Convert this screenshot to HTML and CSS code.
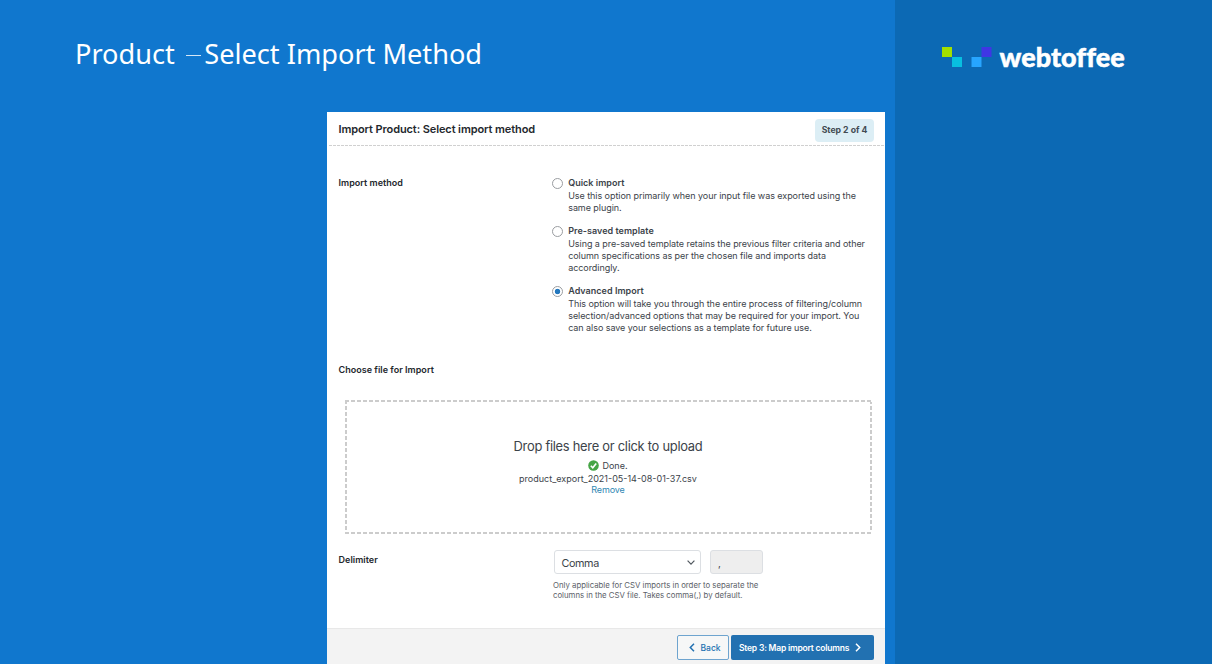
FILE: index.html
```html
<!DOCTYPE html>
<html lang="en">
<head>
<meta charset="utf-8">
<title>Product – Select Import Method</title>
<link rel="stylesheet" href="styles.css">
</head>
<body>
<div class="slide">
  <main class="stage">
    <h1 class="title"><span class="title-first">Product</span><span class="title-dash"></span><span class="title-rest">Select Import Method</span></h1>
    <section class="panel">
      <header class="panel-head">
        <h2 class="panel-title">Import Product: Select import method</h2>
        <span class="step">Step 2 of 4</span>
      </header>
      <div class="method">
        <div class="label">Import method</div>
        <div class="options">
          <div class="option option-quick">
            <span class="radio"></span>
            <div class="option-text"><b>Quick import</b><p>Use this option primarily when your input file was exported using the<br>same plugin.</p></div>
          </div>
          <div class="option option-saved">
            <span class="radio"></span>
            <div class="option-text"><b>Pre-saved template</b><p>Using a pre-saved template retains the previous filter criteria and other<br>column specifications as per the chosen file and imports data<br>accordingly.</p></div>
          </div>
          <div class="option">
            <span class="radio checked"></span>
            <div class="option-text"><b>Advanced Import</b><p>This option will take you through the entire process of filtering/column<br>selection/advanced options that may be required for your import. You<br>can also save your selections as a template for future use.</p></div>
          </div>
        </div>
      </div>
      <div class="label label-choose">Choose file for Import</div>
      <div class="dropzone">
        <div class="drop-title">Drop files here or click to upload</div>
        <div class="done">
          <svg class="check" viewBox="0 0 11 11"><circle cx="5.5" cy="5.5" r="5.3" fill="#46a546"/><path d="M2.8 5.7 4.8 7.7 8.2 3.4" fill="none" stroke="#fff" stroke-width="1.6"/></svg>
          <span>Done.</span>
        </div>
        <div class="filename">product_export_2021-05-14-08-01-37.csv</div>
        <a class="remove">Remove</a>
      </div>
      <div class="delimiter">
        <div class="label label-delimiter">Delimiter</div>
        <div class="delimiter-body">
          <div class="fields">
            <div class="select"><span>Comma</span><svg class="chevron" viewBox="0 0 8 5"><path d="M.6.7 4 4.1 7.4.7" fill="none" stroke="#50575e" stroke-width="1.2"/></svg></div>
            <div class="char">,</div>
          </div>
          <p class="hint">Only applicable for CSV imports in order to separate the<br>columns in the CSV file. Takes comma(,) by default.</p>
        </div>
      </div>
      <footer class="panel-foot">
        <div class="btn btn-back"><svg class="arrow" viewBox="0 0 6 9"><path d="M5 .8 1.3 4.5 5 8.2" fill="none" stroke="#2271b1" stroke-width="1.5"/></svg><span>Back</span></div>
        <div class="btn btn-next"><span>Step 3: Map import columns</span><svg class="arrow" viewBox="0 0 6 9"><path d="M1 .8 4.7 4.5 1 8.2" fill="none" stroke="#fff" stroke-width="1.5"/></svg></div>
      </footer>
    </section>
  </main>
  <aside class="side">
    <div class="brand">
      <svg class="mark" viewBox="0 0 50 20"><path fill="#a3e000" d="M0 0h10v10H0z"/><path fill="#08bfe0" d="M10 10h10v10H10z"/><path fill="#27a5ff" d="M29.5 10h10v10h-10z"/><path fill="#4036e4" d="M39.5 0h10v10h-10z"/></svg>
      <span class="wordmark">webtoffee</span>
    </div>
  </aside>
</div>
</body>
</html>
```
FILE: styles.css
```css
* { box-sizing: border-box; }
body { margin: 0; font-family: Inter, "Liberation Sans", sans-serif; color: #3c434a; }
h1, h2, p { margin: 0; font-weight: 400; }
.slide { display: flex; width: 1212px; height: 664px; overflow: hidden; background: #1077ce; }
.stage { width: 895px; }
.side { width: 317px; background: #0c69b4; padding: 47px 0 0 47px; }
.brand { display: flex; height: 20px; }
.mark { width: 50px; height: 20px; }
.wordmark { margin-left: 7.5px; font: 900 27px/19px Lato, sans-serif; letter-spacing: 0.05px; font-variant-ligatures: none; color: #fff; -webkit-text-stroke: 0.5px #fff; white-space: nowrap; }
.title { display: flex; align-items: center; height: 112px; padding: 0 0 5px 75px; font: 400 27.15px/38px "Noto Sans", sans-serif; color: #fff; white-space: nowrap; }
.title-dash { width: 15px; height: 1px; margin: 4px 3px 0 11.5px; background: #d5e7f7; }
.panel { width: 558px; height: 552px; margin-left: 327px; background: #fff; white-space: nowrap; }
.panel-head { display: flex; justify-content: space-between; height: 34px; padding: 7px 11px 0 11.5px; background: repeating-linear-gradient(90deg, #d0d0d0 0 3px, #fff 3px 4px) 2px 33px / 555px 1px no-repeat; }
.panel-title { font-size: 11px; font-weight: 600; line-height: 20px; letter-spacing: -0.1px; color: #23282d; }
.step { width: 59px; height: 23px; border-radius: 4px; background: #dceef5; font-size: 8.7px; font-weight: 700; line-height: 23px; text-align: center; color: #434b52; }
.label { font-size: 9px; font-weight: 600; line-height: 12px; letter-spacing: 0.03px; color: #23282d; }
.method { display: grid; grid-template-columns: 213.5px 1fr; padding: 31px 0 0 11.5px; height: 218px; }
.option { display: flex; gap: 5.2px; }
.option-quick { height: 47.6px; }
.option-saved { height: 60px; }
.radio { width: 11px; height: 11px; margin-top: 1px; border: 1px solid #9a9da1; border-radius: 50%; background: #fff; }
.checked { background: radial-gradient(circle, #2478be 0 2.4px, #fff 3.1px); }
.option-text b { display: block; font-size: 9px; font-weight: 600; line-height: 12px; letter-spacing: 0.03px; }
.option-text p { font-size: 9px; line-height: 12.4px; letter-spacing: -0.06px; padding-top: 1px; }
.label-choose { padding-left: 11.5px; height: 36px; }
.dropzone { width: 527px; height: 134px; margin-left: 18px; padding: 37px 1px 0 0; text-align: center; font-size: 9px;
  background:
    repeating-linear-gradient(90deg, #ccc 0 4px, #fff 4px 6px) 0 0 / 100% 2px no-repeat,
    repeating-linear-gradient(90deg, #ccc 0 4px, #fff 4px 6px) 0 100% / 100% 2px no-repeat,
    repeating-linear-gradient(180deg, #ccc 0 4px, #fff 4px 6px) 0 0 / 2px 100% no-repeat,
    repeating-linear-gradient(180deg, #ccc 0 4px, #fff 4px 6px) 100% 0 / 2px 100% no-repeat; }
.drop-title { font-size: 12.9px; line-height: 20px; letter-spacing: -0.27px; }
.done { display: flex; justify-content: center; align-items: center; gap: 3px; height: 18px; padding-bottom: 1px; }
.check { width: 11px; height: 11px; }
.filename { line-height: 7px; }
.remove { display: block; line-height: 15px; letter-spacing: -0.1px; color: #2f87b3; }
.delimiter { display: grid; grid-template-columns: 215px 1fr; height: 94px; padding: 16px 0 0 11.5px; }
.label-delimiter { padding-top: 4px; }
.fields { display: flex; gap: 9px; }
.select { display: flex; justify-content: space-between; align-items: center; width: 147.5px; height: 24px; padding: 3px 5px 0 7px; border: 1px solid #dcdfe3; border-radius: 3px; font-size: 10.8px; letter-spacing: -0.4px; }
.chevron { width: 8px; height: 5px; margin-top: -3px; }
.char { width: 53px; height: 24px; padding: 3px 7px; border: 1px solid #dcdfe3; border-radius: 3px; background: #eee; font-size: 10px; line-height: 18px; }
.hint { margin-left: -.5px; padding-top: 7px; font-size: 7.8px; line-height: 9.8px; letter-spacing: -0.01px; color: #5c6168; }
.panel-foot { display: flex; justify-content: flex-end; gap: 2px; height: 36px; padding: 6px 11px 0 0; border-top: 1px solid #e8e8e8; background: #f3f3f3; }
.btn { display: flex; align-items: center; height: 25px; border-radius: 2px; font-size: 8.5px; font-weight: 500; }
.btn-back { width: 52px; gap: 5.5px; padding-left: 11px; border: 1px solid #6ea4cf; color: #2271b1; background: #f6f7f7; }
.btn-next { width: 143px; gap: 5.5px; padding-left: 8px; background: #2271b1; color: #fff; font-weight: 600; letter-spacing: -0.2px; }
.arrow { width: 6px; height: 9px; }
```
